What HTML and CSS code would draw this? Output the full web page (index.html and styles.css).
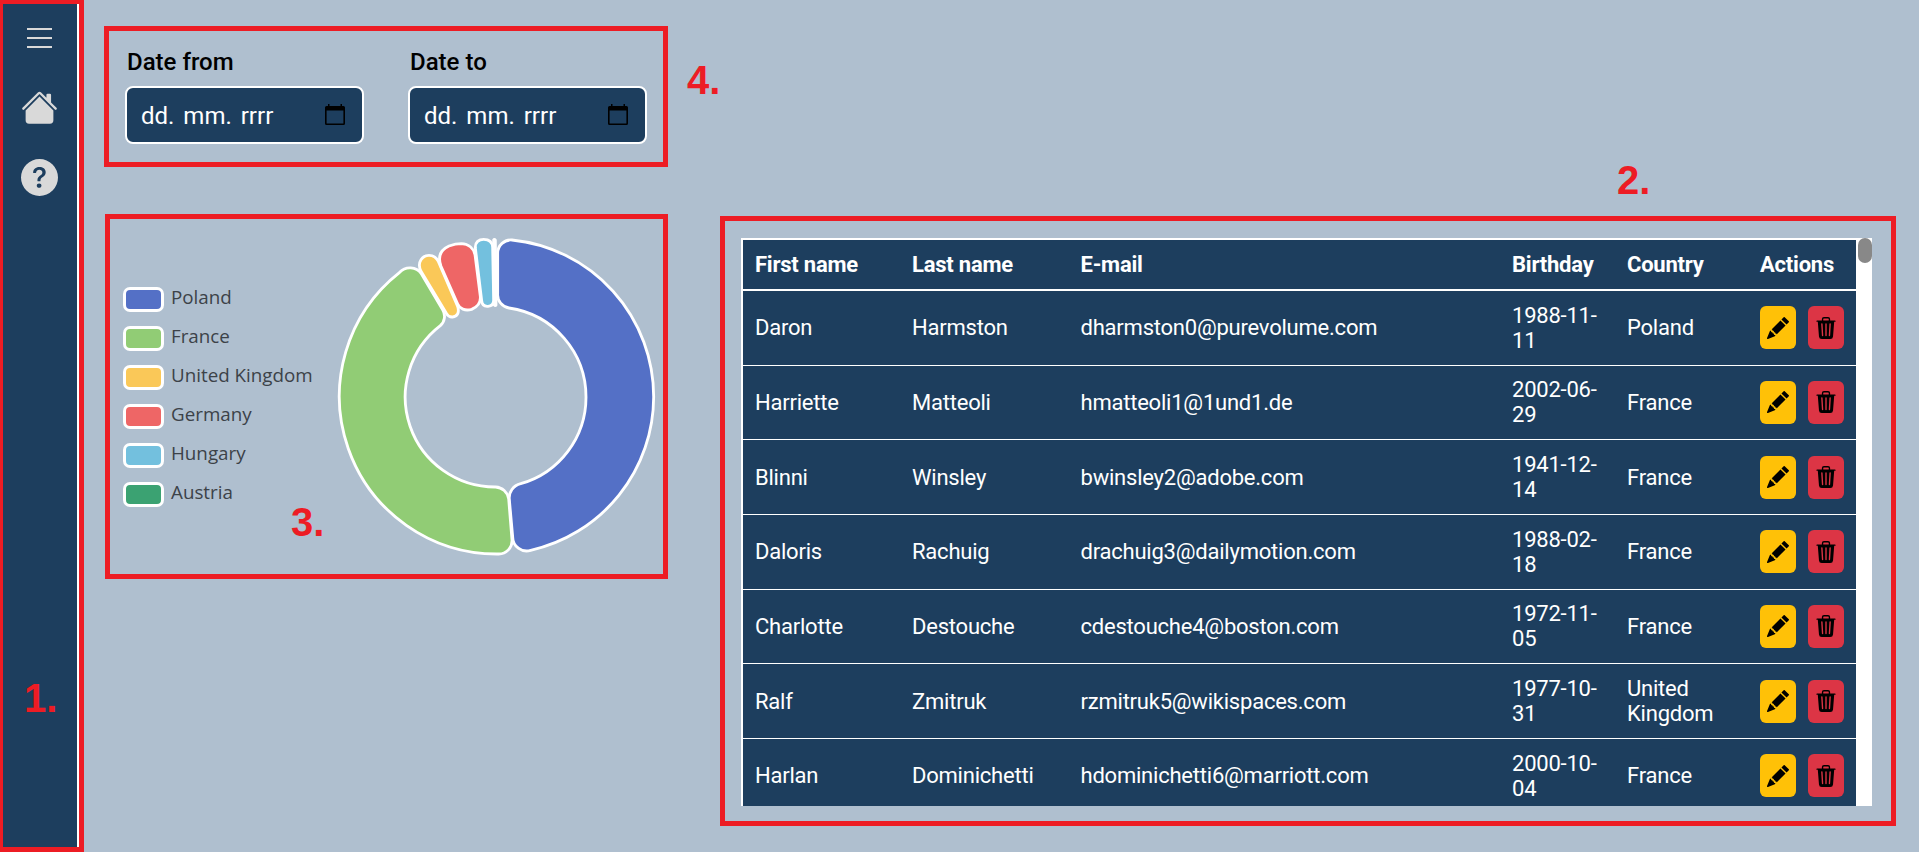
FILE: index.html
```html
<!DOCTYPE html>
<html lang="en">
<head>
<meta charset="utf-8">
<title>Users dashboard</title>
<link rel="stylesheet" href="styles.css">
</head>
<body>
<svg class="sprite" aria-hidden="true">
  <symbol id="pencil" viewBox="0 0 16 16"><path d="M12.854.146a.5.5 0 0 0-.707 0L10.5 1.793 14.207 5.5l1.647-1.646a.5.5 0 0 0 0-.708l-3-3zm.646 6.061L9.793 2.5 3.293 9H3.5a.5.5 0 0 1 .5.5v.5h.5a.5.5 0 0 1 .5.5v.5h.5a.5.5 0 0 1 .5.5v.5h.5a.5.5 0 0 1 .5.5v.207l6.5-6.5zm-7.468 7.468A.5.5 0 0 1 6 13.5V13h-.5a.5.5 0 0 1-.5-.5V12h-.5a.5.5 0 0 1-.5-.5V11h-.5a.5.5 0 0 1-.5-.5V10h-.5a.499.499 0 0 1-.175-.032l-.179.178a.5.5 0 0 0-.11.168l-2 5a.5.5 0 0 0 .65.65l5-2a.5.5 0 0 0 .168-.11l.178-.178z"/></symbol>
  <symbol id="trash" viewBox="0 0 16 16"><path d="M11 1.5v1h3.5a.5.5 0 0 1 0 1h-.538l-.853 10.66A2 2 0 0 1 11.115 16h-6.23a2 2 0 0 1-1.994-1.84L2.038 3.5H1.5a.5.5 0 0 1 0-1H5v-1A1.5 1.5 0 0 1 6.5 0h3A1.5 1.5 0 0 1 11 1.5Zm-5 0v1h4v-1a.5.5 0 0 0-.5-.5h-3a.5.5 0 0 0-.5.5ZM4.5 5.029l.5 8.5a.5.5 0 1 0 .998-.06l-.5-8.5a.5.5 0 1 0-.998.06Zm6.53-.528a.5.5 0 0 0-.528.47l-.5 8.5a.5.5 0 0 0 .998.058l.5-8.5a.5.5 0 0 0-.47-.528ZM8 4.5a.5.5 0 0 0-.5.5v8.5a.5.5 0 0 0 1 0V5a.5.5 0 0 0-.5-.5Z"/></symbol>
  <symbol id="calendar" viewBox="0 0 20 21"><path fill-rule="evenodd" d="M3 0h1.500v2h11V0h1.500v2h1.500A1.500 1.500 0 0 1 20 3.500V19.500A1.500 1.500 0 0 1 18.500 21H1.500A1.500 1.500 0 0 1 0 19.500V3.500A1.500 1.500 0 0 1 1.500 2H3ZM1.600 6.600V19.500H18.400V6.600Z"/></symbol>
</svg>
<div class="app">
  <nav class="sidebar">
    <svg class="menu" viewBox="0 0 25 20"><path d="M0 0h25v2H0zM0 9h25v2H0zM0 18h25v2H0z"/></svg>
    <svg class="home" viewBox="0 0 16 16"><path d="M8.707 1.5a1 1 0 0 0-1.414 0L.646 8.146a.5.5 0 0 0 .708.708L8 2.207l6.646 6.647a.5.5 0 0 0 .708-.708L13 5.793V2.5a.5.5 0 0 0-.5-.5h-1a.5.5 0 0 0-.5.5v1.293L8.707 1.5Z"/><path d="m8 3.293 6 6V13.500a1.500 1.500 0 0 1-1.500 1.500h-9A1.500 1.500 0 0 1 2 13.500V9.293l6-6Z"/></svg>
    <svg class="help" viewBox="0 0 16 16"><path d="M16 8A8 8 0 1 1 0 8a8 8 0 0 1 16 0M5.496 6.033h.825c.138 0 .248-.113.266-.25.09-.656.54-1.134 1.342-1.134.686 0 1.314.343 1.314 1.168 0 .635-.374.927-.965 1.371-.673.489-1.206 1.06-1.168 1.987l.003.217a.25.25 0 0 0 .25.246h.811a.25.25 0 0 0 .25-.25v-.105c0-.718.273-.927 1.01-1.486.609-.463 1.244-.977 1.244-2.056 0-1.511-1.276-2.241-2.673-2.241-1.267 0-2.655.59-2.75 2.286a.237.237 0 0 0 .241.247m2.325 6.443c.61 0 1.029-.394 1.029-.927 0-.552-.42-.94-1.029-.94-.584 0-1.009.388-1.009.94 0 .533.425.927 1.010.927z"/></svg>
  </nav>
  <main class="main">
    <section class="filters">
      <div class="field"><div class="label">Date from</div><div class="date"><span>dd. mm. rrrr</span><svg><use href="#calendar"/></svg></div></div>
      <div class="field"><div class="label">Date to</div><div class="date"><span>dd. mm. rrrr</span><svg><use href="#calendar"/></svg></div></div>
    </section>
    <div class="content">
      <section class="chart">
        <ul class="legend">
          <li><i class="swatch poland"></i><span>Poland</span></li>
          <li><i class="swatch france"></i><span>France</span></li>
          <li><i class="swatch uk"></i><span>United Kingdom</span></li>
          <li><i class="swatch germany"></i><span>Germany</span></li>
          <li><i class="swatch hungary"></i><span>Hungary</span></li>
          <li><i class="swatch austria"></i><span>Austria</span></li>
        </ul>
        <svg class="donut" viewBox="21 97 960 960">
          <path fill="#5470c6" d="M506 145A40 40 0 0 1 549 106A473 473 0 0 1 974 577A473 473 0 0 1 605 1037A42 42 0 0 1 551 997L541 885A44 44 0 0 1 575 837A270 270 0 0 0 771 577A270 270 0 0 0 540 310A40 40 0 0 1 506 268Z"/>
          <path fill="#91cc75" d="M500 847A42 42 0 0 1 539 882L549 1005A40 40 0 0 1 508 1048A473 473 0 0 1 212 203A42 42 0 0 1 277 207L341 315A38 38 0 0 1 334 363A270 270 0 0 0 500 847Z"/>
          <path fill="#fac858" d="M276 200C262 172 282 152 300 152C312 152 322 159 328 170L386 305C392 325 384 336 371 337C360 338 356 333 352 326Z"/>
          <path fill="#ee6666" d="M336 185C324 152 338 134 360 124C377 118 390 117 397 117C420 118 434 132 438 150L454 275C456 297 443 308 428 314C408 320 392 312 386 298Z"/>
          <path fill="#73c0de" d="M439 130C438 112 450 104 464 104C480 104 490 112 491 128L494 285C495 300 488 304 477 305C465 306 459 300 458 288Z"/>
          <path fill="#fff" d="M494 106Q496 102 499 106L501 301Q499 305 496 301Z"/>
        </svg>
      </section>
      <section class="table-box">
        <table class="users">
          <thead><tr><th>First name</th><th>Last name</th><th>E-mail</th><th>Birthday</th><th>Country</th><th>Actions</th></tr></thead>
          <tbody>
            <tr><td>Daron</td><td>Harmston</td><td>dharmston0@purevolume.com</td><td class="birthday">1988-11-11</td><td>Poland</td><td class="actions"><button class="edit"><svg><use href="#pencil"/></svg></button><button class="delete"><svg><use href="#trash"/></svg></button></td></tr>
            <tr><td>Harriette</td><td>Matteoli</td><td>hmatteoli1@1und1.de</td><td class="birthday">2002-06-29</td><td>France</td><td class="actions"><button class="edit"><svg><use href="#pencil"/></svg></button><button class="delete"><svg><use href="#trash"/></svg></button></td></tr>
            <tr><td>Blinni</td><td>Winsley</td><td>bwinsley2@adobe.com</td><td class="birthday">1941-12-14</td><td>France</td><td class="actions"><button class="edit"><svg><use href="#pencil"/></svg></button><button class="delete"><svg><use href="#trash"/></svg></button></td></tr>
            <tr><td>Daloris</td><td>Rachuig</td><td>drachuig3@dailymotion.com</td><td class="birthday">1988-02-18</td><td>France</td><td class="actions"><button class="edit"><svg><use href="#pencil"/></svg></button><button class="delete"><svg><use href="#trash"/></svg></button></td></tr>
            <tr><td>Charlotte</td><td>Destouche</td><td>cdestouche4@boston.com</td><td class="birthday">1972-11-05</td><td>France</td><td class="actions"><button class="edit"><svg><use href="#pencil"/></svg></button><button class="delete"><svg><use href="#trash"/></svg></button></td></tr>
            <tr><td>Ralf</td><td>Zmitruk</td><td>rzmitruk5@wikispaces.com</td><td class="birthday">1977-10-31</td><td>United Kingdom</td><td class="actions"><button class="edit"><svg><use href="#pencil"/></svg></button><button class="delete"><svg><use href="#trash"/></svg></button></td></tr>
            <tr><td>Harlan</td><td>Dominichetti</td><td>hdominichetti6@marriott.com</td><td class="birthday">2000-10-04</td><td>France</td><td class="actions"><button class="edit"><svg><use href="#pencil"/></svg></button><button class="delete"><svg><use href="#trash"/></svg></button></td></tr>
          </tbody>
        </table>
        <div class="scrollbar"><div class="thumb"></div></div>
      </section>
    </div>
  </main>
</div>
<div class="frame frame-1"></div><div class="mark mark-1">1.</div>
<div class="frame frame-2"></div><div class="mark mark-2">2.</div>
<div class="frame frame-3"></div><div class="mark mark-3">3.</div>
<div class="frame frame-4"></div><div class="mark mark-4">4.</div>
</body>
</html>
```
FILE: styles.css
```css
* { box-sizing: border-box; }
body { margin: 0; height: 852px; overflow: hidden; position: relative; background: #afbfcf; font-family: Roboto, sans-serif; }
.sprite { display: none; }
.app { display: flex; height: 852px; }

.sidebar { width: 79px; background: #1d3e5e; border-right: 2px solid #fff; display: flex; flex-direction: column; align-items: center; padding: 28px 0 0 2px; fill: #d9d9d9; }
.menu { width: 25px; height: 20px; }
.home { width: 37px; height: 37px; margin-top: 41px; }
.help { width: 37px; height: 37px; margin-top: 33px; }

.main { flex: 1; padding: 45px 47px 0 46px; }
.filters { display: flex; gap: 44px; height: 193px; }
.field { width: 239px; }
.label { font-size: 24px; font-weight: 500; line-height: 34px; padding-left: 2px; color: #000; }
.date { margin-top: 7px; height: 58px; border: 2px solid #fff; border-radius: 8px; background: #1d3e5e; color: #fff; font-size: 24px; word-spacing: 3px; display: flex; align-items: center; justify-content: space-between; padding: 0 17px 0 14px; }
.date span { padding-top: 2px; }
.date svg { width: 20px; height: 21px; margin-bottom: 2px; }

.content { display: flex; justify-content: space-between; }
.chart { display: flex; width: 540px; }
.legend { list-style: none; margin: 49px 0 0 -2px; padding: 0; width: 213px; }
.legend li { display: flex; gap: 7px; height: 39px; align-items: flex-start; font-family: "Open Sans", sans-serif; font-size: 18.8px; line-height: 22px; color: #3c4248; white-space: nowrap; }
.swatch { width: 41px; height: 25px; border: 3px solid #fff; border-radius: 7px; }
.legend span { margin-top: -1px; }
.poland { background: #5470c6; }
.france { background: #91cc75; }
.uk { background: #fac858; }
.germany { background: #ee6666; }
.hungary { background: #73c0de; }
.austria { background: #3ba272; }
.donut { width: 320px; height: 320px; margin-top: -1px; stroke: #fff; stroke-width: 8.500; stroke-linejoin: round; }

.table-box { width: 1131px; height: 568px; overflow: hidden; display: flex; background: #fff; }
.users { display: block; width: 1115px; border: 2px solid #fff; border-width: 2px 0 0 2px; color: #fff; font-size: 22px; line-height: 25px; letter-spacing: -0.22px; }
.users thead, .users tbody { display: block; background: #1d3e5e; }
.users tr { display: grid; grid-template-columns: 157px 168.500px 431.500px 115px 133px 96px; padding-left: 12px; align-items: center; height: 74.65px; border-bottom: 1px solid #fff; }
.users thead tr { height: 51px; border-bottom-width: 2px; }
.users th { padding: 0; text-align: left; font-weight: 700; }
.users td { padding: 0 34px 0 0; }
.users td.birthday { padding-right: 25px; }
.users td.actions { display: flex; gap: 12px; padding: 0; }
.actions button { width: 36px; height: 43px; padding: 0; border: 0; border-radius: 6px; display: grid; place-items: center; }
.actions svg { width: 22px; height: 22px; }
.edit { background: #ffc107; }
.delete { background: #dc3545; }
.scrollbar { width: 16px; padding-left: 2px; }
.thumb { width: 14px; height: 25px; border-radius: 7px; background: #888; }

/* Numbered callouts drawn over the dashboard */
.frame { position: absolute; border: 5px solid #ed1c24; }
.frame-1 { left: -2px; top: -1px; width: 86px; height: 853px; }
.frame-2 { left: 720px; top: 216px; width: 1176px; height: 610px; }
.frame-3 { left: 105px; top: 214px; width: 563px; height: 365px; }
.frame-4 { left: 104px; top: 26px; width: 564px; height: 141px; }
.mark { position: absolute; font: bold 40px/40px "Liberation Sans", Arial, sans-serif; color: #ed1c24; }
.mark-1 { left: 24px; top: 678px; }
.mark-2 { left: 1617px; top: 160px; }
.mark-3 { left: 291px; top: 502px; }
.mark-4 { left: 687px; top: 60px; }
```
